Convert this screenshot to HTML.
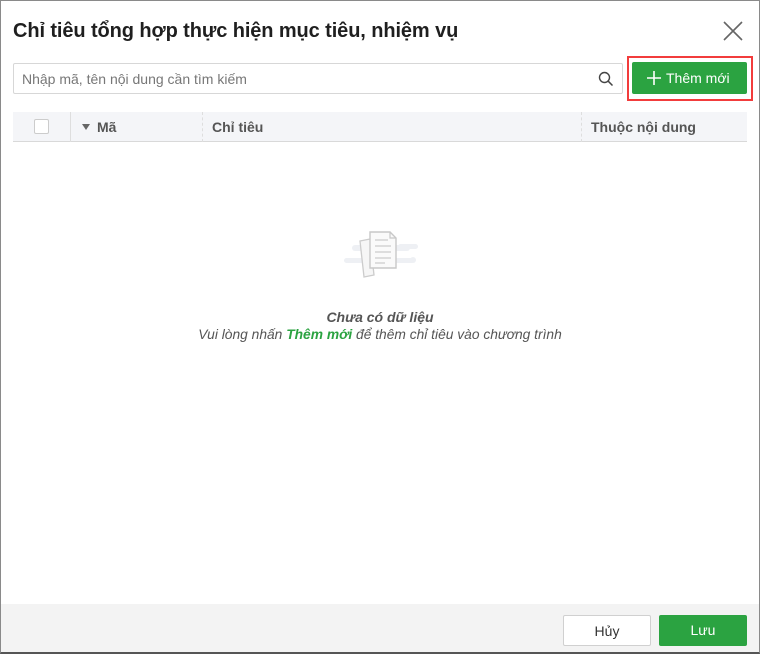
<!DOCTYPE html>
<html><head><meta charset="utf-8"><style>
*{box-sizing:border-box;margin:0;padding:0}
body{width:760px;height:654px;background:#fff;font-family:"Liberation Sans",Arial,sans-serif;position:relative;overflow:hidden}
.frame{position:absolute;left:0;top:0;width:760px;height:654px;border:1px solid #8a8a8a;border-bottom:2px solid #555}
.title{position:absolute;left:13px;top:20px;font-size:20px;font-weight:bold;color:#1f1f1f;letter-spacing:-0.1px}
.close{position:absolute;left:722px;top:20px}
.search{position:absolute;left:13px;top:63px;width:610px;height:31px;border:1px solid #d7d7d7;border-radius:2px;font-size:14px;color:#777;padding:7px 0 0 8px}
.search svg{position:absolute;right:8px;top:7px}
.redbox{position:absolute;left:627px;top:56px;width:126px;height:45px;border:2px solid #f23c3c}
.add{position:absolute;left:632px;top:62px;width:115px;height:32px;background:#2ba341;border-radius:2px;color:#fff;font-size:14px;padding:8px 0 0 16px}
.add svg{position:absolute;left:15px;top:9px}
.add span{margin-left:18px}
.thead{position:absolute;left:13px;top:112px;width:734px;height:30px;background:#f4f5f8;border-bottom:1px solid #d9d9d9;font-size:14px;font-weight:bold;color:#555}
.cb{position:absolute;left:21px;top:7px;width:15px;height:15px;border:1px solid #ccc;background:#fff;border-radius:2px}
.sep{position:absolute;top:0;height:30px;border-left:1px solid #dedede}
.th{position:absolute;top:7px}
.e1{position:absolute;left:0;width:760px;top:309px;text-align:center;font-size:14px;font-style:italic;font-weight:bold;color:#555}
.e2{position:absolute;left:0;width:760px;top:327px;text-align:center;font-size:13.8px;font-style:italic;color:#555}
.e2 b{color:#2ba341}
.footer{position:absolute;left:1px;top:604px;width:758px;height:48px;background:#f3f3f3}
.btn{position:absolute;top:615px;height:31px;width:88px;border-radius:2px;font-size:14px;text-align:center;padding-top:7px}
</style></head><body>
<div class="footer"></div>
<div class="frame"></div>
<div class="title">Chỉ tiêu tổng hợp thực hiện mục tiêu, nhiệm vụ</div>
<svg class="close" width="22" height="22" viewBox="0 0 22 22"><path d="M2 2L20 20M20 2L2 20" stroke="#666" stroke-width="1.6"/></svg>
<div class="search">Nhập mã, tên nội dung cần tìm kiếm
<svg width="16" height="16" viewBox="0 0 16 16"><circle cx="6.5" cy="6.5" r="5" fill="none" stroke="#444" stroke-width="1.4"/><path d="M10.2 10.2L14.5 14.5" stroke="#444" stroke-width="1.5"/></svg></div>
<div class="redbox"></div>
<div class="add"><svg width="14" height="14" viewBox="0 0 14 14"><path d="M7 0V14M0 7H14" stroke="#fff" stroke-width="1.6"/></svg><span>Thêm mới</span></div>
<div class="thead">
<div class="cb"></div>
<div class="sep" style="left:57px"></div>
<svg style="position:absolute;left:69px;top:12px" width="8" height="6" viewBox="0 0 8 6"><path d="M0 0H8L4 6Z" fill="#666"/></svg>
<div class="th" style="left:84px">Mã</div>
<div class="sep" style="left:189px;border-left-style:dashed"></div>
<div class="th" style="left:199px">Chỉ tiêu</div>
<div class="sep" style="left:568px;border-left-style:dashed"></div>
<div class="th" style="left:578px">Thuộc nội dung</div>
</div>
<svg style="position:absolute;left:340px;top:228px" width="86" height="50" viewBox="0 0 86 50">
<g fill="#eef0f4"><rect x="12" y="17" width="58" height="6" rx="3"/><rect x="4" y="30" width="70" height="5" rx="2.5"/><rect x="70" y="29" width="6" height="6" rx="3"/><rect x="58" y="16" width="20" height="5" rx="2.5"/></g>
<path d="M20 13L30 11L34 47L24 49Z" fill="#f6f6f6" stroke="#ccc" stroke-width="1.3"/>
<path d="M30 4H50L56 10V40H30Z" fill="#fafafa" stroke="#c8c8c8" stroke-width="1.4"/>
<path d="M50 4V10H56" fill="none" stroke="#c8c8c8" stroke-width="1.2"/>
<g stroke="#ccc" stroke-width="1.2"><path d="M35 12H48M35 18H51M35 24H51M35 30H51M35 35H45"/></g>
</svg>
<div class="e1">Chưa có dữ liệu</div>
<div class="e2">Vui lòng nhấn <b>Thêm mới</b> để thêm chỉ tiêu vào chương trình</div>
<div class="btn" style="left:563px;background:#fff;border:1px solid #d0d0d0;color:#333">Hủy</div>
<div class="btn" style="left:659px;background:#2ba341;color:#fff">Lưu</div>
</body></html>
